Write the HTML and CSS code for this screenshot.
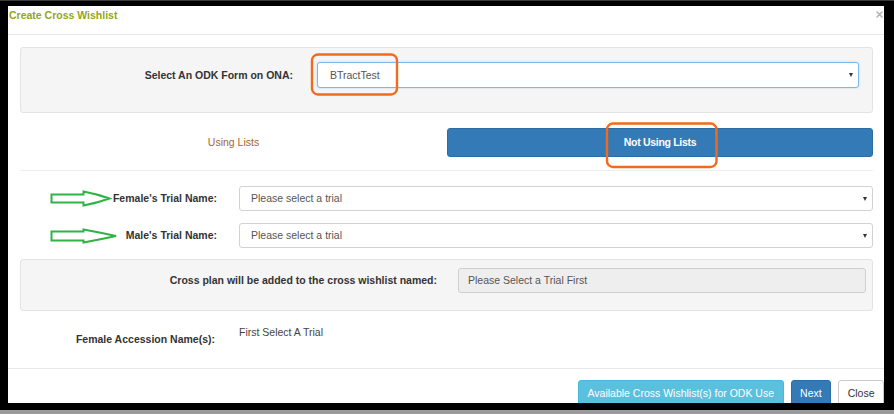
FILE: index.html
```html
<!DOCTYPE html>
<html>
<head>
<meta charset="utf-8">
<link rel="stylesheet" href="styles.css">
</head>
<body>
<div class="screen">
  <div class="modal">
    <div class="modal-header">
      <span class="title">Create Cross Wishlist</span>
      <span class="close-x"><svg width="7" height="7" viewBox="0 0 7 7"><path d="M1 1L6 6M6 1L1 6" stroke="#b5b5b5" stroke-width="1.6" stroke-linecap="round"/></svg></span>
    </div>
    <div class="modal-body">
      <div class="well well-form">
        <label class="lbl">Select An ODK Form on ONA:</label>
        <div class="select focus"><span>BTractTest</span><i class="caret"></i></div>
      </div>
      <div class="tabs">
        <div class="tab">Using Lists</div>
        <div class="tab active">Not Using Lists</div>
      </div>
      <div class="sep"></div>
      <div class="row first">
        <label class="lbl">Female's Trial Name:</label>
        <div class="select"><span>Please select a trial</span><i class="caret"></i></div>
      </div>
      <div class="row">
        <label class="lbl">Male's Trial Name:</label>
        <div class="select"><span>Please select a trial</span><i class="caret"></i></div>
      </div>
      <div class="well well-name">
        <label class="lbl">Cross plan will be added to the cross wishlist named:</label>
        <div class="input-disabled">Please Select a Trial First</div>
      </div>
      <div class="row acc">
        <label class="lbl acc-lbl">Female Accession Name(s):</label>
        <div class="value">First Select A Trial</div>
      </div>
    </div>
    <div class="modal-footer">
      <button class="btn btn-info">Available Cross Wishlist(s) for ODK Use</button>
      <button class="btn btn-primary">Next</button>
      <button class="btn btn-default">Close</button>
    </div>
  </div>
  <svg class="annotations" width="894" height="414" viewBox="0 0 894 414">
    <rect x="312" y="53.5" width="85" height="40" rx="6" fill="none" stroke="#f26a1b" stroke-width="2.4"/>
    <rect x="607" y="122.5" width="109.5" height="43.5" rx="6" fill="none" stroke="#f26a1b" stroke-width="2.4"/>
    <path d="M51.5 193.5 H83.5 V190.5 Q97 193 109.5 197.5 Q97 202 83.5 204.5 V201.5 H51.5 Z" fill="#fff" stroke="#2fb346" stroke-width="2"/>
    <path d="M51.5 230.5 H83.5 V228.5 Q100 231.5 116 235 Q100 238.5 83.5 241.5 V239.5 H51.5 Z" fill="#fff" stroke="#2fb346" stroke-width="2"/>
  </svg>
</div>
</body>
</html>
```

FILE: styles.css
```css
* { box-sizing: border-box; }

body {
  margin: 0;
  font-family: "Liberation Sans", Arial, sans-serif;
  font-size: 10.5px;
  line-height: 15px;
  color: #333;
}

.screen {
  position: relative;
  width: 894px;
  height: 414px;
  background: #000;
  padding: 5px 10px 0 8px;
  border-top: 1px solid #3a3a3a;
  overflow: hidden;
}

.screen::after {
  content: "";
  position: absolute;
  left: 0;
  right: 0;
  bottom: 0;
  height: 4px;
  background: #9a9a9a;
}

.modal {
  background: #fff;
  height: 397px;
  display: flex;
  flex-direction: column;
  overflow: hidden;
}

.modal-header {
  height: 29px;
  flex: none;
  border-bottom: 1px solid #e8e8e8;
  display: flex;
  justify-content: space-between;
  align-items: flex-start;
  padding: 2px 1px 0 1px;
}

.title {
  font-weight: bold;
  color: #92a61a;
}

.close-x {
  display: flex;
  padding-top: 3px;
}

.modal-body {
  padding: 12px 11px 0 12px;
}

.well {
  background: #f5f5f5;
  border: 1px solid #e3e3e3;
  border-radius: 3px;
  display: grid;
  align-items: center;
}

.well-form {
  grid-template-columns: 272px 1fr;
  column-gap: 24px;
  padding: 14px 13px 24px 0;
}

.lbl {
  font-weight: bold;
  text-align: right;
  color: #333;
}

.select {
  height: 26px;
  border: 1px solid #d2d2d2;
  border-radius: 3px;
  background: #fff;
  display: flex;
  align-items: center;
  justify-content: space-between;
  padding: 0 5px 0 11px;
  color: #555;
}

.select.focus {
  border-color: #7cb8ea;
  box-shadow: 0 0 2px rgba(102, 175, 233, 0.5);
  padding-left: 12px;
}

.caret {
  width: 0;
  height: 0;
  border-left: 2.5px solid transparent;
  border-right: 2.5px solid transparent;
  border-top: 4px solid #333;
}

.tabs {
  margin-top: 15px;
  height: 29px;
  display: grid;
  grid-template-columns: 427px 1fr;
}

.tab {
  display: flex;
  align-items: center;
  justify-content: center;
  color: #a8642c;
}

.tab.active {
  background: #337ab7;
  border: 1px solid #2e6da4;
  border-radius: 3px;
  color: #fff;
  font-weight: 600;
  letter-spacing: -0.3px;
}

.sep {
  margin-top: 13px;
  border-top: 1px solid #eeeeee;
}

.row {
  display: grid;
  grid-template-columns: 197px 1fr;
  column-gap: 22px;
  align-items: center;
  margin-top: 12px;
}

.row.first {
  margin-top: 15px;
}

.row .select {
  height: 25px;
}

.well-name {
  margin-top: 11px;
  grid-template-columns: 416px 1fr;
  column-gap: 21px;
  padding: 8px 6px 17px 0;
}

.input-disabled {
  height: 25px;
  background: #eeeeee;
  border: 1px solid #cfcfcf;
  border-radius: 3px;
  display: flex;
  align-items: center;
  padding-left: 9px;
  color: #555;
}

.row.acc {
  margin-top: 14px;
  align-items: start;
}

.acc-lbl {
  padding-top: 7px;
  padding-right: 2px;
}

.value {
  color: #444;
}

.modal-footer {
  margin-top: auto;
  flex: none;
  height: 35px;
  border-top: 1px solid #e8e8e8;
  padding-top: 11px;
  display: flex;
  justify-content: flex-end;
  align-items: flex-start;
  gap: 7px;
}

.btn {
  font-family: "Liberation Sans", Arial, sans-serif;
  font-size: 10.5px;
  height: 26px;
  padding: 0 8.5px;
  border: 1px solid transparent;
  border-radius: 3px;
  flex: none;
}

.btn-info {
  background: #5bc0de;
  border-color: #46b8da;
  color: #fff;
}

.btn-primary {
  background: #337ab7;
  border-color: #2e6da4;
  color: #fff;
}

.btn-default {
  background: #fff;
  border-color: #ccc;
  color: #333;
}

.annotations {
  position: absolute;
  left: 0;
  top: 0;
  pointer-events: none;
}
```
